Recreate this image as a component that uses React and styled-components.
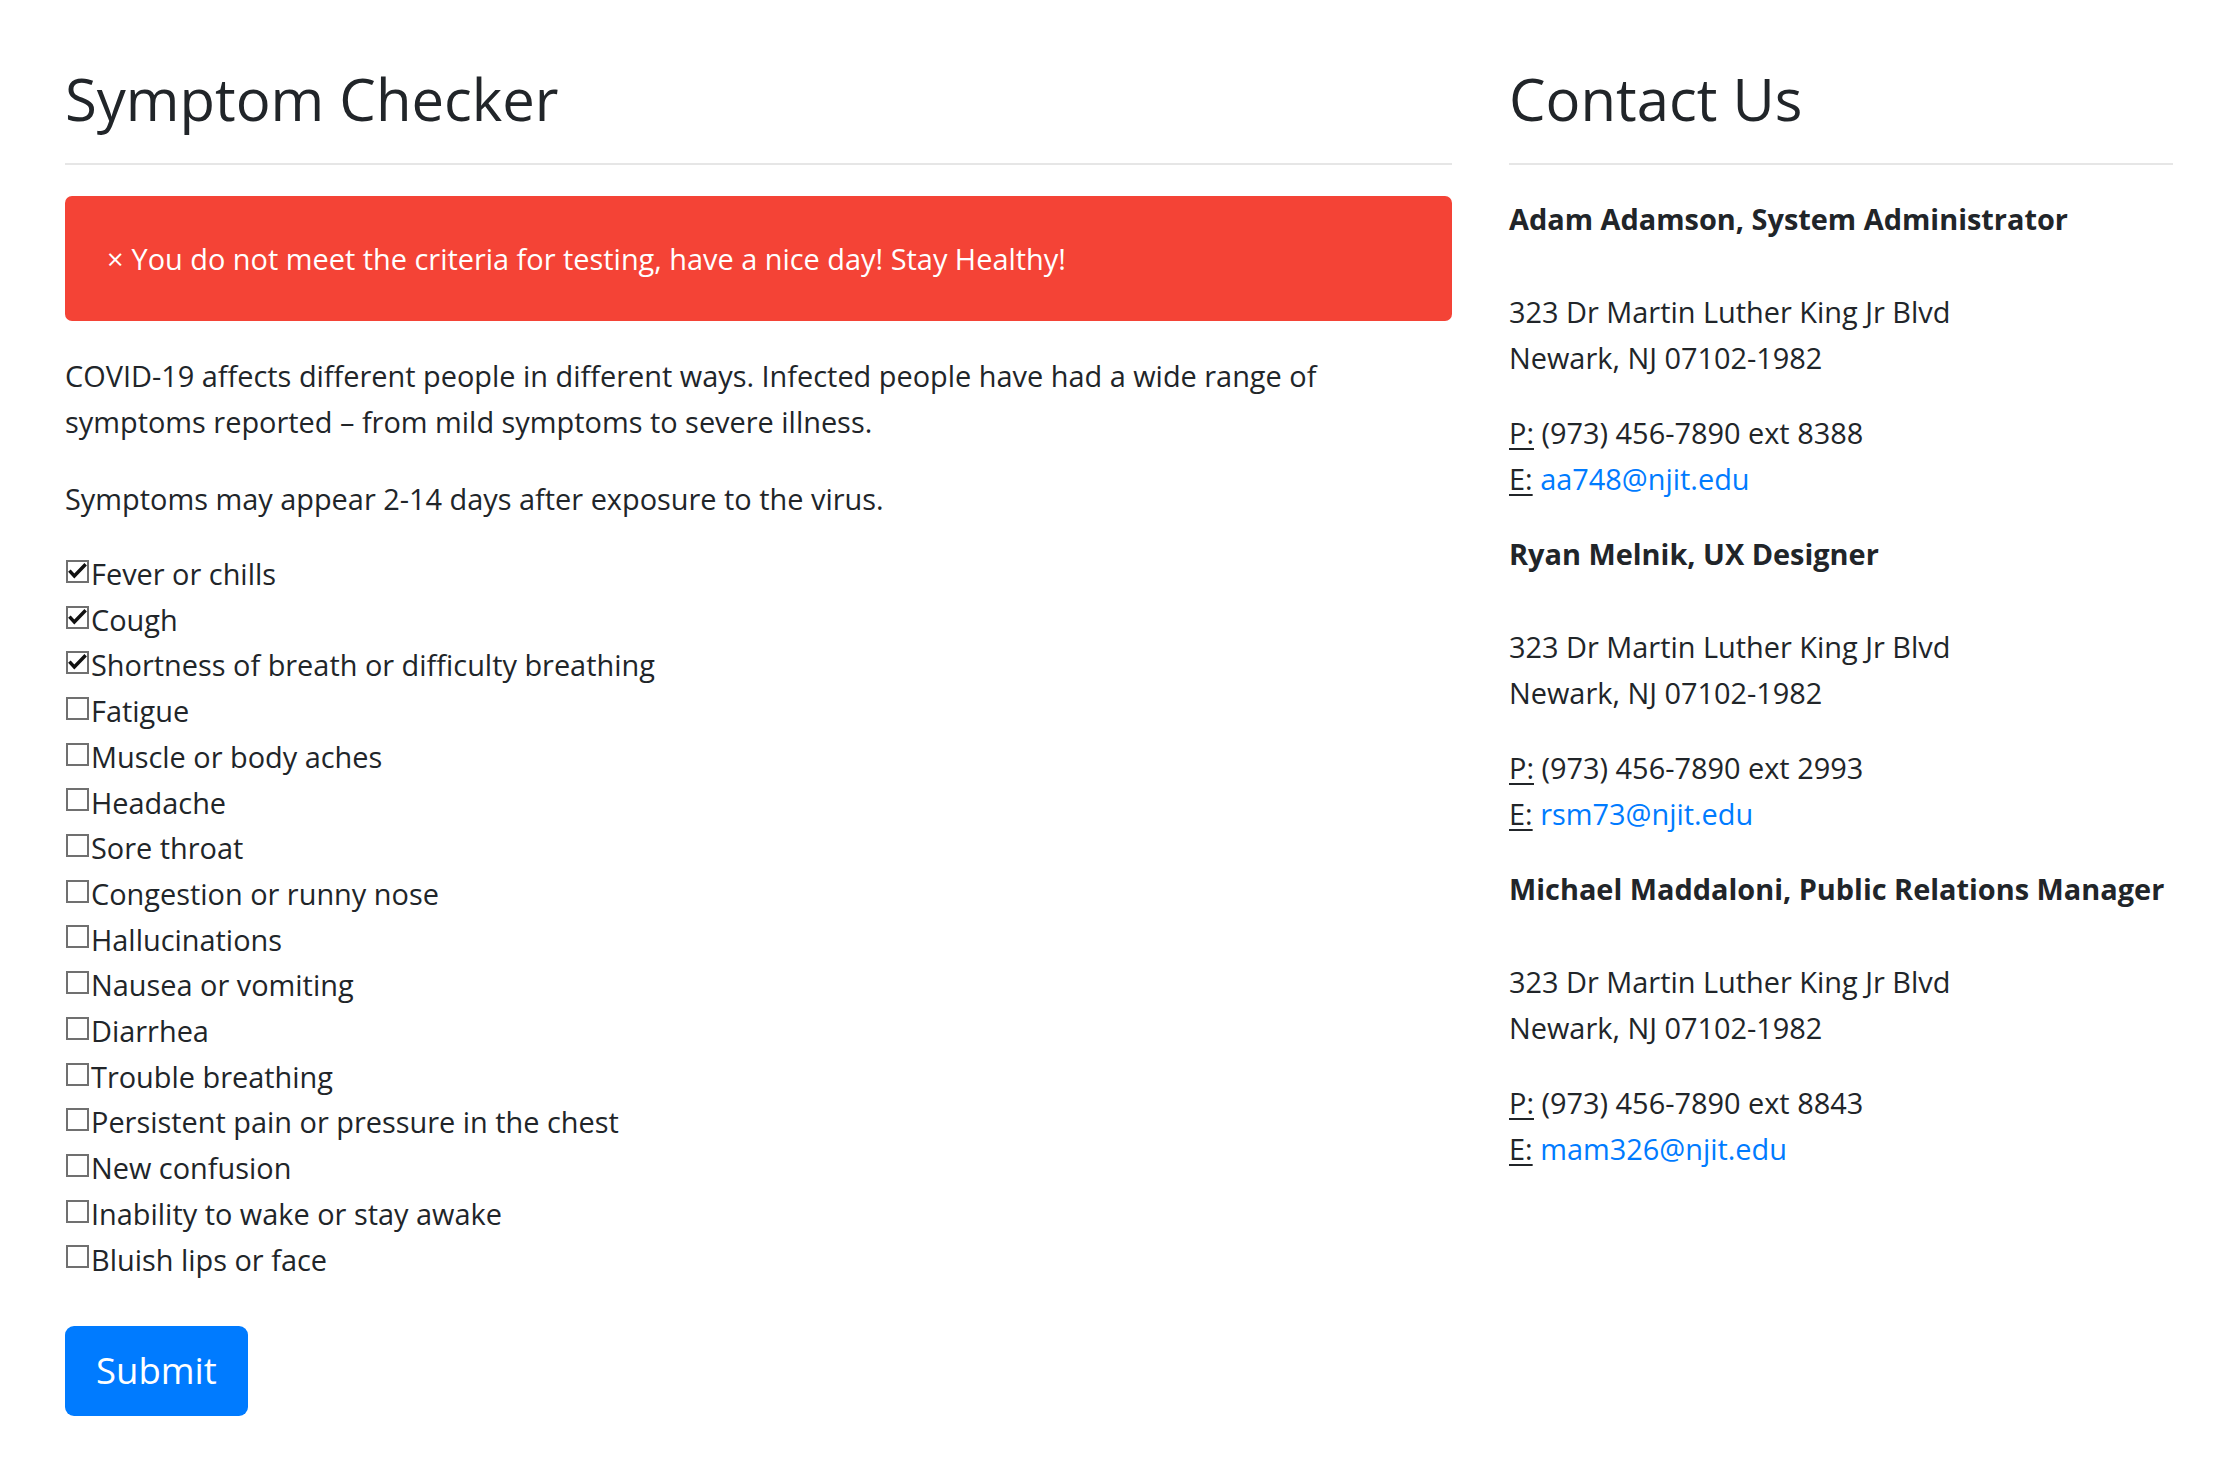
import React, { useState } from "react";
import styled, { createGlobalStyle } from "styled-components";

const GlobalStyle = createGlobalStyle`
  html, body {
    margin: 0;
    padding: 0;
    background: #fff;
  }
  body {
    font-family: "Open Sans", "Noto Sans", sans-serif;
    font-size: 28.9px;
    line-height: 46px;
    color: #212529;
  }
`;

const Page = styled.div`
  display: flex;
  gap: 57px;
  padding: 63px 42px 40px 65px;
`;

const Column = styled.section`
  width: ${(p) => p.width}px;
  flex-shrink: 0;
`;

const Heading = styled.h2`
  margin: 0;
  font-size: 58px;
  line-height: 72px;
  font-weight: 400;
  color: #212529;
`;

const Divider = styled.hr`
  border: 0;
  border-top: 2px solid #e6e6e6;
  margin: 28px 0 31px;
`;

const Alert = styled.div`
  background: #f44336;
  color: #fff;
  border-radius: 7px;
  padding: 40px 42px 39px;
  margin-bottom: 32px;
`;

const Close = styled.span`
  margin-right: 8px;
`;

const Text = styled.p`
  margin: 0 0 ${(p) => p.gap || 30}px;
`;

const Symptoms = styled.div`
  display: flex;
  flex-direction: column;
  margin-bottom: 44px;
`;

const Row = styled.label`
  display: flex;
  align-items: center;
  line-height: 45.7px;
  cursor: pointer;
`;

const Box = styled.span`
  box-sizing: border-box;
  width: 23px;
  height: 23px;
  border: 2px solid #707070;
  background: #fff;
  margin: 0 2px 5px 1px;
  display: inline-flex;
  align-items: center;
  justify-content: center;
  flex-shrink: 0;
`;

const HiddenInput = styled.input`
  display: none;
`;

const SubmitButton = styled.button`
  font-family: inherit;
  font-size: 36.5px;
  line-height: 57px;
  padding: 16px 31px 17px;
  color: #fff;
  background: #007bff;
  border: 0;
  border-radius: 9px;
  cursor: pointer;
`;

const Name = styled.div`
  font-weight: 700;
  margin-bottom: 47px;
  white-space: nowrap;
`;

const Block = styled.div`
  margin-bottom: 29px;
`;

const Abbr = styled.span`
  text-decoration: underline;
  text-underline-offset: 4px;
  text-decoration-thickness: 2px;
`;

const Mail = styled.a`
  color: #007bff;
  text-decoration: none;
`;

const symptomList = [
  "Fever or chills",
  "Cough",
  "Shortness of breath or difficulty breathing",
  "Fatigue",
  "Muscle or body aches",
  "Headache",
  "Sore throat",
  "Congestion or runny nose",
  "Hallucinations",
  "Nausea or vomiting",
  "Diarrhea",
  "Trouble breathing",
  "Persistent pain or pressure in the chest",
  "New confusion",
  "Inability to wake or stay awake",
  "Bluish lips or face",
];

const contacts = [
  { name: "Adam Adamson, System Administrator", ext: "8388", mail: "aa748@njit.edu" },
  { name: "Ryan Melnik, UX Designer", ext: "2993", mail: "rsm73@njit.edu" },
  { name: "Michael Maddaloni, Public Relations Manager", ext: "8843", mail: "mam326@njit.edu" },
];

function Symptom({ label, checked, onToggle }) {
  return (
    <Row>
      <HiddenInput type="checkbox" checked={checked} onChange={onToggle} />
      <Box>
        {checked && (
          <svg width="21" height="19" viewBox="0 0 21 19">
            <path d="M1.5 8.5 L7 14.5 L19.5 1.5" fill="none" stroke="#111" strokeWidth="3.8" />
          </svg>
        )}
      </Box>
      {label}
    </Row>
  );
}

export default function App() {
  const [checked, setChecked] = useState([0, 1, 2]);

  const toggle = (i) => {
    setChecked((c) => (c.includes(i) ? c.filter((x) => x !== i) : [...c, i]));
  };

  return (
    <>
      <GlobalStyle />
      <Page>
        <Column width={1387}>
          <Heading>Symptom Checker</Heading>
          <Divider />
          <Alert>
            <Close>×</Close>You do not meet the criteria for testing, have a nice day! Stay Healthy!
          </Alert>
          <Text gap={31}>
            COVID-19 affects different people in different ways. Infected people have had a wide range of
            symptoms reported – from mild symptoms to severe illness.
          </Text>
          <Text gap={29}>Symptoms may appear 2-14 days after exposure to the virus.</Text>
          <Symptoms>
            {symptomList.map((s, i) => (
              <Symptom key={s} label={s} checked={checked.includes(i)} onToggle={() => toggle(i)} />
            ))}
          </Symptoms>
          <SubmitButton>Submit</SubmitButton>
        </Column>
        <Column width={664}>
          <Heading>Contact Us</Heading>
          <Divider />
          {contacts.map((c) => (
            <div key={c.name}>
              <Name>{c.name}</Name>
              <Block>
                323 Dr Martin Luther King Jr Blvd
                <br />
                Newark, NJ 07102-1982
              </Block>
              <Block>
                <Abbr>P:</Abbr> (973) 456-7890 ext {c.ext}
                <br />
                <Abbr>E:</Abbr> <Mail href={"mailto:" + c.mail}>{c.mail}</Mail>
              </Block>
            </div>
          ))}
        </Column>
      </Page>
    </>
  );
}
